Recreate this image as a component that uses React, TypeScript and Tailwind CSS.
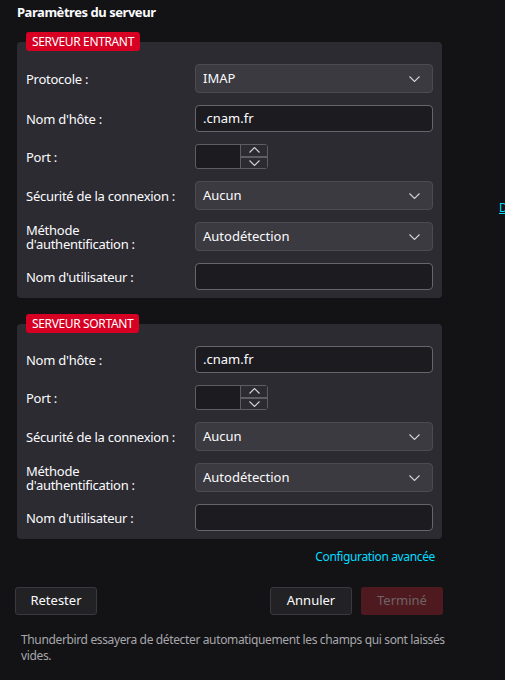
import React from 'react'

const font = { fontFamily: '"Segoe UI", "Noto Sans", sans-serif' }

function Chevron({ up = false }: { up?: boolean }) {
  return (
    <svg width="11" height="6" viewBox="0 0 11 6" fill="none" className={up ? 'rotate-180' : ''}>
      <path d="M0.5 0.5l5 5 5-5" stroke="#d4d4d8" strokeWidth="1.1" />
    </svg>
  )
}

function Select({ value }: { value: string }) {
  return (
    <div className="flex h-[29px] w-[238px] items-center justify-between rounded-[4px] border border-[#4c4b51] bg-[#3b3a40] pl-[7px] pr-[12px] text-[13px] text-[#fbfbfe]">
      <span>{value}</span>
      <Chevron />
    </div>
  )
}

function TextInput({ value = '' }: { value?: string }) {
  return (
    <div className="flex h-[27px] w-[238px] items-center rounded-[4px] border border-[#66656b] bg-[#1c1b20] px-[7px] text-[13px] text-[#fbfbfe]">
      {value}
    </div>
  )
}

function Spin() {
  return (
    <div className="flex h-[25px] w-[73px] rounded-[3px] border border-[#5e5d63] bg-[#1c1b20]">
      <div className="flex-1" />
      <div className="flex w-[27px] flex-col border-l border-[#5e5d63] bg-[#2c2b31]">
        <div className="flex flex-1 items-center justify-center border-b-2 border-[#5e5d63]">
          <Chevron up />
        </div>
        <div className="flex flex-1 items-center justify-center">
          <Chevron />
        </div>
      </div>
    </div>
  )
}

function Row({ label, children }: { label: React.ReactNode; children: React.ReactNode }) {
  return (
    <div className="flex items-center">
      <div className="w-[169px] text-[13px] leading-[14px] tracking-[-0.02em] text-[#fbfbfe]">{label}</div>
      {children}
    </div>
  )
}

function Section({ title, children }: { title: string; children: React.ReactNode }) {
  return (
    <div className="flex flex-col">
      <div className="relative z-10 ml-[9px] self-start rounded-[3px] bg-[#d70022] px-[6px] text-[12px] leading-[19px] tracking-[-0.03em] text-white">
        {title}
      </div>
      <div className="-mt-[9px] flex w-[425px] flex-col gap-3 rounded-[4px] bg-[#2c2b31] pb-[8px] pl-[9px] pt-[22px]">
        {children}
      </div>
    </div>
  )
}

export default function App() {
  const methode = (
    <>
      Méthode
      <br />
      d'authentification :
    </>
  )
  return (
    <div className="relative h-[680px] w-[505px] overflow-hidden bg-[#131316]" style={font}>
      <h1 className="pl-[17px] pt-[3px] text-[13px] font-bold leading-[18px] tracking-[-0.035em] text-[#fbfbfe]">
        Paramètres du serveur
      </h1>

      <div className="mt-[11px] flex flex-col gap-4 pl-[17px]">
        <Section title="SERVEUR ENTRANT">
          <Row label="Protocole :">
            <Select value="IMAP" />
          </Row>
          <Row label="Nom d'hôte :">
            <TextInput value=".cnam.fr" />
          </Row>
          <Row label="Port :">
            <Spin />
          </Row>
          <Row label="Sécurité de la connexion :">
            <Select value="Aucun" />
          </Row>
          <Row label={methode}>
            <Select value="Autodétection" />
          </Row>
          <Row label="Nom d'utilisateur :">
            <TextInput />
          </Row>
        </Section>

        <Section title="SERVEUR SORTANT">
          <Row label="Nom d'hôte :">
            <TextInput value=".cnam.fr" />
          </Row>
          <Row label="Port :">
            <Spin />
          </Row>
          <Row label="Sécurité de la connexion :">
            <Select value="Aucun" />
          </Row>
          <Row label={methode}>
            <Select value="Autodétection" />
          </Row>
          <Row label="Nom d'utilisateur :">
            <TextInput />
          </Row>
        </Section>
      </div>

      <div className="flex w-[435px] justify-end pt-[9px]">
        <span className="text-[12px] leading-[18px] tracking-[-0.03em] text-[#00ddff]">Configuration avancée</span>
      </div>

      <div className="mt-[21px] flex w-[443px] items-center pl-[15px]">
        <button className="h-[28px] w-[82px] rounded-[3px] border border-[#3a3a3e] bg-[#222225] text-[13px] text-[#fbfbfe]">
          Retester
        </button>
        <div className="flex-1" />
        <button className="h-[28px] w-[82px] rounded-[3px] border border-[#3a3a3e] bg-[#222225] text-[13px] text-[#fbfbfe]">
          Annuler
        </button>
        <button className="ml-[9px] h-[28px] w-[82px] rounded-[3px] bg-[#4e1a20] text-[13px] text-[#6e6466]">
          Terminé
        </button>
      </div>

      <p className="mt-[17px] w-[460px] pl-[21px] text-[12px] leading-[16px] tracking-[-0.03em] text-[#a7a7ab]">
        Thunderbird essayera de détecter automatiquement les champs qui sont laissés vides.
      </p>

      <span className="absolute left-[499px] top-[199px] text-[12px] text-[#00ddff] underline">D</span>
    </div>
  )
}
